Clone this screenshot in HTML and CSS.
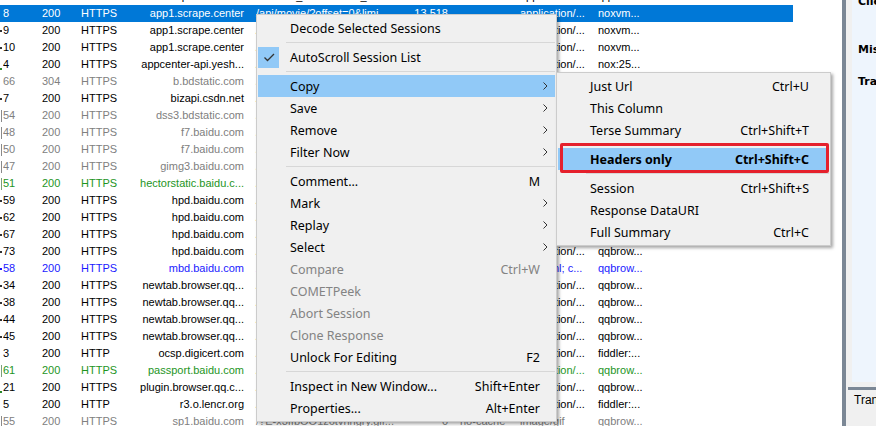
FILE: index.html
```html
<!DOCTYPE html>
<html>
<head>
<meta charset="utf-8">
<link rel="stylesheet" href="styles.css">
</head>
<body>
<div class="app">
  <div class="list">
    <div class="rows">
      <div class="row"><span class="mk"></span><span>11</span><span>200</span><span>HTTPS</span><span class="h">api.bilibili.com</span><span class="u">/session_dv?/session_dm</span><span class="b">280</span><span class="c">no-cache</span><span class="t">application/...</span><span class="p">qqbrow...</span></div>
      <div class="row sel"><span class="mk"></span><span>8</span><span>200</span><span>HTTPS</span><span class="h">app1.scrape.center</span><span class="u">/api/movie/?offset=0&amp;limi</span><span class="b">13,518</span><span class="c"></span><span class="t">application/...</span><span class="p">noxvm...</span></div>
      <div class="row"><span class="mk dot"></span><span>9</span><span>200</span><span>HTTPS</span><span class="h">app1.scrape.center</span><span class="u">/api/movie/?offset=10&amp;li</span><span class="b">13,230</span><span class="c"></span><span class="t">application/...</span><span class="p">noxvm...</span></div>
      <div class="row"><span class="mk dot"></span><span>10</span><span>200</span><span>HTTPS</span><span class="h">app1.scrape.center</span><span class="u">/api/movie/?offset=20&amp;li</span><span class="b">13,402</span><span class="c"></span><span class="t">application/...</span><span class="p">noxvm...</span></div>
      <div class="row"><span class="mk gdot"></span><span>4</span><span>200</span><span>HTTPS</span><span class="h">appcenter-api.yesh...</span><span class="u">/api/v1/app/check</span><span class="b">512</span><span class="c"></span><span class="t">application/...</span><span class="p">nox:25...</span></div>
      <div class="row gray"><span class="mk"></span><span>66</span><span>304</span><span>HTTPS</span><span class="h">b.bdstatic.com</span><span class="u">/searchbox/icms/other</span><span class="b">0</span><span class="c">max-age</span><span class="t"></span><span class="p">qqbrow...</span></div>
      <div class="row"><span class="mk dot"></span><span>7</span><span>200</span><span>HTTPS</span><span class="h">bizapi.csdn.net</span><span class="u">/passport-api/v1/user</span><span class="b">98</span><span class="c"></span><span class="t">application/...</span><span class="p">qqbrow...</span></div>
      <div class="row gray"><span class="mk bar"></span><span>54</span><span>200</span><span>HTTPS</span><span class="h">dss3.bdstatic.com</span><span class="u">/lPoZeXSm1A5BphGlnYG/</span><span class="b">1,024</span><span class="c">max-age</span><span class="t">image/png</span><span class="p">qqbrow...</span></div>
      <div class="row gray"><span class="mk bar"></span><span>48</span><span>200</span><span>HTTPS</span><span class="h">f7.baidu.com</span><span class="u">/it/u=1048582719</span><span class="b">5,210</span><span class="c">max-age</span><span class="t">image/jpeg</span><span class="p">qqbrow...</span></div>
      <div class="row gray"><span class="mk bar"></span><span>50</span><span>200</span><span>HTTPS</span><span class="h">f7.baidu.com</span><span class="u">/it/u=2239572119</span><span class="b">6,118</span><span class="c">max-age</span><span class="t">image/jpeg</span><span class="p">qqbrow...</span></div>
      <div class="row gray"><span class="mk bar"></span><span>47</span><span>200</span><span>HTTPS</span><span class="h">gimg3.baidu.com</span><span class="u">/search/src=http</span><span class="b">8,406</span><span class="c">max-age</span><span class="t">image/jpeg</span><span class="p">qqbrow...</span></div>
      <div class="row green"><span class="mk gbar"></span><span>51</span><span>200</span><span>HTTPS</span><span class="h">hectorstatic.baidu.c...</span><span class="u">/cd37ed75a9387c5b.js</span><span class="b">3,201</span><span class="c">max-age</span><span class="t">application/...</span><span class="p">qqbrow...</span></div>
      <div class="row"><span class="mk dot"></span><span>59</span><span>200</span><span>HTTPS</span><span class="h">hpd.baidu.com</span><span class="u">/v.gif?ct=4&amp;logFrom</span><span class="b">43</span><span class="c"></span><span class="t">application/...</span><span class="p">qqbrow...</span></div>
      <div class="row"><span class="mk dot"></span><span>62</span><span>200</span><span>HTTPS</span><span class="h">hpd.baidu.com</span><span class="u">/v.gif?ct=4&amp;logFrom</span><span class="b">43</span><span class="c"></span><span class="t">application/...</span><span class="p">qqbrow...</span></div>
      <div class="row"><span class="mk dot"></span><span>67</span><span>200</span><span>HTTPS</span><span class="h">hpd.baidu.com</span><span class="u">/v.gif?ct=4&amp;logFrom</span><span class="b">43</span><span class="c"></span><span class="t">application/...</span><span class="p">qqbrow...</span></div>
      <div class="row"><span class="mk dot"></span><span>73</span><span>200</span><span>HTTPS</span><span class="h">hpd.baidu.com</span><span class="u">/v.gif?ct=4&amp;logFrom</span><span class="b">43</span><span class="c"></span><span class="t">application/...</span><span class="p">qqbrow...</span></div>
      <div class="row blue"><span class="mk bdot"></span><span>58</span><span>200</span><span>HTTPS</span><span class="h">mbd.baidu.com</span><span class="u">/newspage/data/landing</span><span class="b">21,904</span><span class="c">no-cache</span><span class="t">text/html; c...</span><span class="p">qqbrow...</span></div>
      <div class="row"><span class="mk dot"></span><span>34</span><span>200</span><span>HTTPS</span><span class="h">newtab.browser.qq...</span><span class="u">/cgi-bin/newtab/config</span><span class="b">1,876</span><span class="c"></span><span class="t">application/...</span><span class="p">qqbrow...</span></div>
      <div class="row"><span class="mk dot"></span><span>38</span><span>200</span><span>HTTPS</span><span class="h">newtab.browser.qq...</span><span class="u">/cgi-bin/newtab/feeds</span><span class="b">2,340</span><span class="c"></span><span class="t">application/...</span><span class="p">qqbrow...</span></div>
      <div class="row"><span class="mk dot"></span><span>44</span><span>200</span><span>HTTPS</span><span class="h">newtab.browser.qq...</span><span class="u">/cgi-bin/newtab/sites</span><span class="b">986</span><span class="c"></span><span class="t">application/...</span><span class="p">qqbrow...</span></div>
      <div class="row"><span class="mk dot"></span><span>45</span><span>200</span><span>HTTPS</span><span class="h">newtab.browser.qq...</span><span class="u">/cgi-bin/newtab/weather</span><span class="b">734</span><span class="c"></span><span class="t">application/...</span><span class="p">qqbrow...</span></div>
      <div class="row"><span class="mk"></span><span>3</span><span>200</span><span>HTTP</span><span class="h">ocsp.digicert.com</span><span class="u">/MFEwTzBNMEswSTAJBgUr</span><span class="b">471</span><span class="c">max-age</span><span class="t">application/...</span><span class="p">fiddler:...</span></div>
      <div class="row green"><span class="mk gbar"></span><span>61</span><span>200</span><span>HTTPS</span><span class="h">passport.baidu.com</span><span class="u">/v2/api/?getapi&amp;tpl</span><span class="b">1,152</span><span class="c"></span><span class="t">application/...</span><span class="p">qqbrow...</span></div>
      <div class="row"><span class="mk gdot"></span><span>21</span><span>200</span><span>HTTPS</span><span class="h">plugin.browser.qq.c...</span><span class="u">/plugin/list</span><span class="b">3,002</span><span class="c"></span><span class="t">application/...</span><span class="p">qqbrow...</span></div>
      <div class="row"><span class="mk"></span><span>5</span><span>200</span><span>HTTP</span><span class="h">r3.o.lencr.org</span><span class="u">/MFMwUTBPME0wSzAJBgUr</span><span class="b">503</span><span class="c">max-age</span><span class="t">application/...</span><span class="p">fiddler:...</span></div>
      <div class="row gray"><span class="mk bar"></span><span>55</span><span>200</span><span>HTTPS</span><span class="h">sp1.baidu.com</span><span class="u">/?E-x3IIbOO1z6tvnhgry.gif...</span><span class="b">0</span><span class="c">no-cache</span><span class="t">image/gif</span><span class="p">qqbrow...</span></div>
    </div>
  </div>
  <div class="vsplit"></div>
  <div class="side">
    <div class="inspector">
      <div class="lbl first">Client Connected:</div>
      <div class="lbl second">Miscellaneous</div>
      <div class="lbl third">Transfer Timeline</div>
    </div>
    <div class="hsplit"></div>
    <div class="tabs">Transformer</div>
  </div>

  <div class="menu ctx">
    <div class="mi"><span class="lb">Decode Selected Sessions</span></div>
    <div class="sep"></div>
    <div class="mi"><span class="chk"><svg width="21" height="21" viewBox="0 0 21 21"><polyline points="6.5,10.5 9.5,13.5 16,7" fill="none" stroke="#333" stroke-width="1.3"/></svg></span><span class="lb">AutoScroll Session List</span></div>
    <div class="sep"></div>
    <div class="mi hl"><span class="lb">Copy</span><span class="arr"><svg width="5" height="8" viewBox="0 0 5 8"><polyline points="0.5,0.5 4,4 0.5,7.5" fill="none" stroke="#333" stroke-width="1"/></svg></span></div>
    <div class="mi"><span class="lb">Save</span><span class="arr"><svg width="5" height="8" viewBox="0 0 5 8"><polyline points="0.5,0.5 4,4 0.5,7.5" fill="none" stroke="#333" stroke-width="1"/></svg></span></div>
    <div class="mi"><span class="lb">Remove</span><span class="arr"><svg width="5" height="8" viewBox="0 0 5 8"><polyline points="0.5,0.5 4,4 0.5,7.5" fill="none" stroke="#333" stroke-width="1"/></svg></span></div>
    <div class="mi"><span class="lb">Filter Now</span><span class="arr"><svg width="5" height="8" viewBox="0 0 5 8"><polyline points="0.5,0.5 4,4 0.5,7.5" fill="none" stroke="#333" stroke-width="1"/></svg></span></div>
    <div class="sep"></div>
    <div class="mi"><span class="lb">Comment...</span><span class="sc">M</span></div>
    <div class="mi"><span class="lb">Mark</span><span class="arr"><svg width="5" height="8" viewBox="0 0 5 8"><polyline points="0.5,0.5 4,4 0.5,7.5" fill="none" stroke="#333" stroke-width="1"/></svg></span></div>
    <div class="mi"><span class="lb">Replay</span><span class="arr"><svg width="5" height="8" viewBox="0 0 5 8"><polyline points="0.5,0.5 4,4 0.5,7.5" fill="none" stroke="#333" stroke-width="1"/></svg></span></div>
    <div class="mi"><span class="lb">Select</span><span class="arr"><svg width="5" height="8" viewBox="0 0 5 8"><polyline points="0.5,0.5 4,4 0.5,7.5" fill="none" stroke="#333" stroke-width="1"/></svg></span></div>
    <div class="mi dis"><span class="lb">Compare</span><span class="sc">Ctrl+W</span></div>
    <div class="mi dis"><span class="lb">COMETPeek</span></div>
    <div class="mi dis"><span class="lb">Abort Session</span></div>
    <div class="mi dis"><span class="lb">Clone Response</span></div>
    <div class="mi"><span class="lb">Unlock For Editing</span><span class="sc">F2</span></div>
    <div class="sep"></div>
    <div class="mi"><span class="lb">Inspect in New Window...</span><span class="sc">Shift+Enter</span></div>
    <div class="mi"><span class="lb">Properties...</span><span class="sc">Alt+Enter</span></div>
  </div>

  <div class="menu subm">
    <div class="mi"><span class="lb">Just Url</span><span class="sc">Ctrl+U</span></div>
    <div class="mi"><span class="lb">This Column</span></div>
    <div class="mi"><span class="lb">Terse Summary</span><span class="sc">Ctrl+Shift+T</span></div>
    <div class="sep"></div>
    <div class="mi hl bold"><span class="lb">Headers only</span><span class="sc">Ctrl+Shift+C</span></div>
    <div class="sep"></div>
    <div class="mi"><span class="lb">Session</span><span class="sc">Ctrl+Shift+S</span></div>
    <div class="mi"><span class="lb">Response DataURI</span></div>
    <div class="mi"><span class="lb">Full Summary</span><span class="sc">Ctrl+C</span></div>
  </div>

  <div class="annot"></div>
</div>
</body>
</html>
```

FILE: styles.css
```css
html, body {
  margin: 0;
  padding: 0;
}
body {
  width: 876px;
  height: 426px;
  overflow: hidden;
  background: #fff;
  font-family: "Liberation Sans", Arial, sans-serif;
  font-size: 11px;
  color: #000;
}
.app {
  position: relative;
  display: flex;
  width: 876px;
  height: 426px;
  overflow: hidden;
}
.list {
  width: 842px;
  flex: none;
  background: #fff;
  overflow: hidden;
}
.rows {
  margin-top: -12px;
}
.row {
  display: grid;
  grid-template-columns: 3px 39px 39px 54px 113px 156px 48px 64px 78px 199px;
  width: 793px;
  height: 17px;
  line-height: 17px;
  color: #000;
}
.row > span {
  white-space: nowrap;
  overflow: hidden;
}
.row .h { text-align: right; padding-right: 4px; }
.row .u { padding-left: 8px; }
.row .b { text-align: right; padding-right: 4px; }
.row .c { padding-left: 8px; }
.row .t { padding-left: 4px; }
.row .p { padding-left: 4px; }
.row.sel { background: #0078d7; color: #fff; }
.row.gray { color: #808080; }
.row.green { color: #1e951e; }
.row.blue { color: #1a1aff; }

.mk {
  display: flex;
  align-items: center;
}
.mk::before {
  content: "";
  display: block;
}
.mk.dot::before { width: 2px; height: 2px; background: #333; }
.mk.gdot::before { width: 2px; height: 2px; background: #2a8a2a; margin-top: 8px; }
.mk.bdot::before { width: 2px; height: 2px; background: #1a1aff; }
.mk.bar::before { width: 1px; height: 12px; margin-left: 1px; background: #8a8a8a; }
.mk.gbar::before { width: 1px; height: 12px; margin-left: 1px; background: #7aa07a; }

.vsplit {
  width: 4px;
  flex: none;
  background: #7b8795;
}
.side {
  flex: 1;
  min-width: 0;
  display: flex;
  flex-direction: column;
  background: #f0f0f0;
  padding-left: 2px;
}
.inspector {
  margin-left: 4px;
  height: 382px;
  flex: none;
  background: #eef5fd;
  padding-left: 6px;
  overflow: hidden;
  font-family: "DejaVu Sans", Verdana, sans-serif;
  font-weight: bold;
  font-size: 11px;
}
.lbl {
  white-space: nowrap;
  line-height: 16px;
}
.lbl.first { margin-top: -6px; }
.lbl.second { margin-top: 32px; }
.lbl.third { margin-top: 16px; }
.hsplit {
  margin-top: 5px;
  height: 3px;
  flex: none;
  background: #7b8795;
}
.tabs {
  padding: 2px 0 0 6px;
  line-height: 16px;
  font-size: 12px;
  white-space: nowrap;
  overflow: hidden;
}

.menu {
  position: absolute;
  box-sizing: border-box;
  background: #f0f0f0;
  border: 1px solid #cccccc;
  padding: 2px 1px;
  font-family: "Noto Sans", "Open Sans", sans-serif;
  font-size: 12.5px;
  color: #000;
  box-shadow: 2px 2px 3px rgba(0, 0, 0, 0.35);
}
.ctx {
  left: 256px;
  top: 14px;
  width: 301px;
}
.subm {
  left: 556px;
  top: 72px;
  width: 275px;
}
.mi {
  position: relative;
  display: flex;
  align-items: center;
  height: 22px;
  padding: 0 15px 0 32px;
  white-space: nowrap;
}
.subm .mi {
  padding-right: 20px;
}
.mi .lb { flex: 1; }
.mi.hl { background: #91c9f7; }
.mi.dis { color: #838383; }
.mi.bold { font-weight: bold; }
.chk {
  position: absolute;
  left: 0;
  top: 1px;
  width: 21px;
  height: 21px;
  background: #91c9f7;
}
.chk svg { display: block; }
.arr {
  position: absolute;
  right: 7px;
  top: 7px;
  width: 5px;
  height: 8px;
}
.arr svg { display: block; }
.sep {
  height: 1px;
  margin: 3px 0 3px 28px;
  background: #d7d7d7;
}
.annot {
  position: absolute;
  left: 560px;
  top: 143px;
  width: 269px;
  height: 30px;
  box-sizing: border-box;
  border: 3px solid #e5202c;
  border-radius: 2px;
}
```
